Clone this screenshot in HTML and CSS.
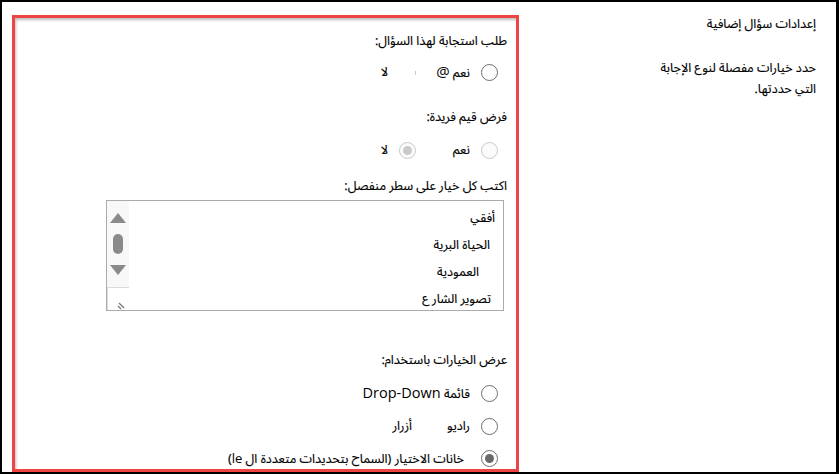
FILE: index.html
```html
<!DOCTYPE html>
<html lang="ar" dir="rtl">
<head>
<meta charset="utf-8">
<title>إعدادات سؤال إضافية</title>
<link rel="stylesheet" href="styles.css">
</head>
<body>
<div class="frame">
  <aside class="info">
    <div class="info-title">إعدادات سؤال إضافية</div>
    <p class="info-text">حدد خيارات مفصلة لنوع الإجابة<br>التي حددتها.</p>
  </aside>
  <section class="panel">
    <div class="label l1">طلب استجابة لهذا السؤال:</div>
    <div class="row r1">
      <span class="opt first"><span class="radio"></span><span>نعم <span class="latin at">@</span></span></span>
      <span class="opt"><span class="ghost"></span><span>لا</span></span>
    </div>

    <div class="label l2">فرض قيم فريدة:</div>
    <div class="row r2">
      <span class="opt first"><span class="radio disabled"></span><span>نعم</span></span>
      <span class="opt"><span class="radio disabled checked"></span><span>لا</span></span>
    </div>

    <div class="label l3">اكتب كل خيار على سطر منفصل:</div>
    <div class="textbox">
      <div class="lines">
        <div class="line line1">أفقي</div>
        <div class="line line2">الحياة البرية</div>
        <div class="line line3">العمودية</div>
        <div class="line line4">تصوير الشارع</div>
      </div>
      <div class="scroll">
        <div class="track">
          <span class="arrow up"></span>
          <span class="thumb"></span>
          <span class="arrow down"></span>
        </div>
        <div class="grip">
          <svg width="12" height="12" viewBox="0 0 12 12"><path d="M2 5 L7 10 M1 8 L4 11" stroke="#777" stroke-width="1.2" fill="none"/></svg>
        </div>
      </div>
    </div>

    <div class="label l4">عرض الخيارات باستخدام:</div>
    <div class="row r3">
      <span class="opt"><span class="radio"></span><span>قائمة <span class="latin dd">Drop-Down</span></span></span>
    </div>
    <div class="row r4">
      <span class="opt"><span class="radio"></span><span>راديو</span><span class="buttons">أزرار</span></span>
    </div>
    <div class="row r5">
      <span class="opt wide"><span class="radio checked"></span><span>خانات الاختيار (السماح بتحديدات متعددة ال <span class="latin">le</span>)</span></span>
    </div>
  </section>
</div>
</body>
</html>
```
FILE: styles.css
```css
html, body {
  margin: 0;
  padding: 0;
  background: #fff;
}

body {
  font-family: "Noto Sans Arabic UI", "Noto Sans Arabic", serif;
  font-size: 12.6px;
  color: #000;
  -webkit-text-stroke: 0.15px #000;
}

.frame {
  box-sizing: border-box;
  width: 839px;
  height: 474px;
  border-style: solid;
  border-color: #000;
  border-width: 2px 3px 2px 2px;
  display: flex;
  flex-direction: row;
  background: #fff;
}

.info {
  width: 317px;
  box-sizing: border-box;
  padding-right: 20px;
  padding-top: 12px;
}

.info-title {
  line-height: 20px;
}

.info-text {
  margin: 23px 0 0;
  line-height: 21px;
}

.panel {
  box-sizing: border-box;
  width: 507px;
  margin-top: 13px;
  margin-left: 10px;
  border: 3px solid #f04444;
  box-shadow: inset 2px 3px 3px -1px #bdbdbd;
  display: flex;
  flex-direction: column;
  padding-right: 9px;
}

.label {
  line-height: 20px;
  height: 20px;
  white-space: nowrap;
}

.l1 { margin-top: 13px; }
.l2 { margin-top: 25px; }
.l3 { margin-top: 16px; }
.l4 { margin-top: 39px; }

.row {
  height: 20px;
  line-height: 20px;
  display: flex;
  align-items: center;
  padding-right: 9px;
  white-space: nowrap;
}

.r1 { margin-top: 11px; }
.r2 { margin-top: 13px; }
.r3 { margin-top: 13px; }
.r4 { margin-top: 13px; }
.r5 { margin-top: 12px; }

.opt {
  display: flex;
  align-items: center;
  gap: 11px;
}

.opt.wide {
  gap: 17px;
}

.opt.first {
  width: 82px;
  flex: none;
}

.radio, .ghost {
  flex: none;
  box-sizing: border-box;
  width: 17px;
  height: 17px;
  border-radius: 50%;
  display: flex;
  align-items: center;
  justify-content: center;
}

.radio {
  border: 1.5px solid #6e6e6e;
  background: #fff;
}

.radio.checked::before {
  content: "";
  width: 9px;
  height: 9px;
  border-radius: 50%;
  background: #6a6a6a;
}

.radio.disabled {
  border-color: #c9c9c9;
  background: #fbfbfb;
}

.radio.disabled.checked::before {
  background: #cacaca;
}

.ghost {
  justify-content: flex-start;
}

.ghost::before {
  content: "";
  width: 1px;
  height: 4px;
  background: #c8c8c8;
  margin-top: 1px;
}

.latin {
  font-family: "Open Sans", "Noto Sans", sans-serif;
  font-size: 13px;
  -webkit-text-stroke: 0;
}

.latin.at {
  font-size: 15px;
}

.latin.dd {
  font-size: 14.5px;
}

.buttons {
  margin-right: 24px;
}

.textbox {
  box-sizing: border-box;
  margin-top: 4px;
  margin-right: 3px;
  width: 398px;
  height: 111px;
  border: 1px solid #ababab;
  display: flex;
  flex-direction: row;
  -webkit-text-stroke: 0;
}

.lines {
  flex: 1;
  padding-top: 3px;
  -webkit-text-stroke: 0.15px #000;
}

.line {
  line-height: 27px;
  height: 27px;
  white-space: nowrap;
}

.line1 { padding-right: 8px; }
.line2 { padding-right: 13px; }
.line3 { padding-right: 24px; }
.line4 { padding-right: 12px; }

.scroll {
  width: 22px;
  flex: none;
  background: #f8f8f8;
  display: flex;
  flex-direction: column;
}

.track {
  flex: 1;
  display: flex;
  flex-direction: column;
  align-items: center;
  padding-top: 12px;
}

.arrow {
  width: 0;
  height: 0;
  border-left: 8px solid transparent;
  border-right: 8px solid transparent;
}

.arrow.up {
  border-bottom: 10px solid #8a8a8a;
}

.thumb {
  margin-top: 11px;
  width: 10px;
  height: 20px;
  border-radius: 5px;
  background: #8a8a8a;
}

.arrow.down {
  margin-top: 11px;
  border-top: 10px solid #8a8a8a;
}

.grip {
  height: 22px;
  border-top: 1px solid #dcdcdc;
  border-left: 1px solid #dcdcdc;
  background: #fff;
  display: flex;
  align-items: flex-end;
  justify-content: flex-start;
}

.grip svg {
  display: block;
}
```
